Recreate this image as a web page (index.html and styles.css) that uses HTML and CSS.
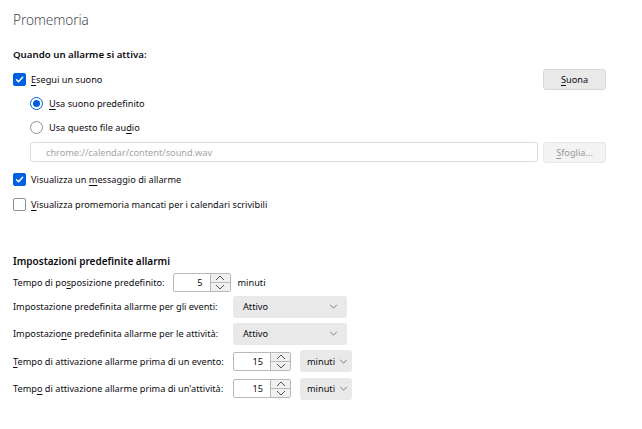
FILE: index.html
```html
<!DOCTYPE html>
<html lang="it">
<head>
<meta charset="utf-8">
<link rel="stylesheet" href="styles.css">
</head>
<body>
<div class="page">
  <h1 class="title">Promemoria</h1>

  <h2 class="heading first">Quando un allarme si attiva:</h2>

  <div class="row r-play">
    <label class="check"><span class="box on"><svg viewBox="0 0 13 13" width="13" height="13"><path d="M3 6.8 L5.4 9.2 L10.2 3.9" fill="none" stroke="#fff" stroke-width="1.8" stroke-linecap="round" stroke-linejoin="round"/></svg></span><span><u>E</u>segui un suono</span></label>
    <span class="spacer"></span>
    <button class="btn"><u>S</u>uona</button>
  </div>

  <div class="row r-radio indent">
    <label class="check"><span class="radio on"><span class="dot"></span></span><span><u>U</u>sa suono predefinito</span></label>
  </div>
  <div class="row r-radio indent">
    <label class="check"><span class="radio"></span><span>Usa questo file au<u>d</u>io</span></label>
  </div>

  <div class="row r-file indent">
    <div class="textfield">chrome://calendar/content/sound.wav</div>
    <button class="btn disabled"><u>S</u>foglia...</button>
  </div>

  <div class="row r-check1">
    <label class="check"><span class="box on"><svg viewBox="0 0 13 13" width="13" height="13"><path d="M3 6.8 L5.4 9.2 L10.2 3.9" fill="none" stroke="#fff" stroke-width="1.8" stroke-linecap="round" stroke-linejoin="round"/></svg></span><span>Visualizza un <u>m</u>essaggio di allarme</span></label>
  </div>
  <div class="row r-check2">
    <label class="check"><span class="box"></span><span><u>V</u>isualizza promemoria mancati per i calendari scrivibili</span></label>
  </div>

  <h2 class="heading second">Impostazioni predefinite allarmi</h2>

  <div class="row r-snooze">
    <span class="lbl">Tempo di po<u>s</u>posizione predefinito:</span>
    <div class="spin"><span class="val">5</span><span class="arrows"><span class="up"><svg viewBox="0 0 10 6" width="10" height="6"><path d="M1 5 L5 1 L9 5" fill="none" stroke="#555" stroke-width="1"/></svg></span><span class="down"><svg viewBox="0 0 10 6" width="10" height="6"><path d="M1 1 L5 5 L9 1" fill="none" stroke="#555" stroke-width="1"/></svg></span></span></div>
    <span class="unit">minuti</span>
  </div>

  <div class="grid">
    <span class="lbl">Impostazione predefinita allarme per gli eventi:</span>
    <div class="select wide"><span>Attivo</span><svg class="chev" viewBox="0 0 10 6" width="9" height="5"><path d="M1 1 L5 5 L9 1" fill="none" stroke="#666" stroke-width="1"/></svg></div>

    <span class="lbl">Impostazio<u>n</u>e predefinita allarme per le attività:</span>
    <div class="select wide"><span>Attivo</span><svg class="chev" viewBox="0 0 10 6" width="9" height="5"><path d="M1 1 L5 5 L9 1" fill="none" stroke="#666" stroke-width="1"/></svg></div>

    <span class="lbl"><u>T</u>empo di attivazione allarme prima di un evento:</span>
    <div class="pair">
      <div class="spin"><span class="val">15</span><span class="arrows"><span class="up"><svg viewBox="0 0 10 6" width="10" height="6"><path d="M1 5 L5 1 L9 5" fill="none" stroke="#555" stroke-width="1"/></svg></span><span class="down"><svg viewBox="0 0 10 6" width="10" height="6"><path d="M1 1 L5 5 L9 1" fill="none" stroke="#555" stroke-width="1"/></svg></span></span></div>
      <div class="select small"><span>minuti</span><svg class="chev" viewBox="0 0 10 6" width="9" height="5"><path d="M1 1 L5 5 L9 1" fill="none" stroke="#666" stroke-width="1"/></svg></div>
    </div>

    <span class="lbl">Temp<u>o</u> di attivazione allarme prima di un'attività:</span>
    <div class="pair">
      <div class="spin"><span class="val">15</span><span class="arrows"><span class="up"><svg viewBox="0 0 10 6" width="10" height="6"><path d="M1 5 L5 1 L9 5" fill="none" stroke="#555" stroke-width="1"/></svg></span><span class="down"><svg viewBox="0 0 10 6" width="10" height="6"><path d="M1 1 L5 5 L9 1" fill="none" stroke="#555" stroke-width="1"/></svg></span></span></div>
      <div class="select small"><span>minuti</span><svg class="chev" viewBox="0 0 10 6" width="9" height="5"><path d="M1 1 L5 5 L9 1" fill="none" stroke="#666" stroke-width="1"/></svg></div>
    </div>
  </div>
</div>
</body>
</html>
```

FILE: styles.css
```css
* { box-sizing: border-box; }
html, body { margin: 0; padding: 0; background: #fff; }
body {
  font-family: "Noto Sans", "Open Sans", sans-serif;
  font-size: 9.2px;
  color: #0c0b10;
  width: 642px;
  height: 429px;
  overflow: hidden;
}
.page { padding: 0 36px 0 13px; }
u { text-decoration: underline; text-underline-offset: 1.5px; text-decoration-thickness: 1px; }

.title {
  margin: 0;
  font-size: 13.6px;
  font-weight: 300;
  color: #4a4a4f;
  height: 40px;
  line-height: 40px;
  letter-spacing: -0.1px;
}
.heading {
  margin: 0;
  font-size: 9.7px;
  font-weight: 600;
  color: #0c0b10;
  display: flex;
  align-items: center;
}
.heading.first { height: 28px; }
.heading.second { height: 24px; font-size: 10px; }

.row { display: flex; align-items: center; }
.indent { padding-left: 17px; }
.r-play { height: 23px; }
.r-radio { height: 24px; }
.r-file { height: 26px; gap: 5px; }
.r-check1 { height: 28px; }
.r-check2 { height: 22px; margin-bottom: 34px; }
.r-snooze { height: 18px; }

.spacer { flex: 1; }

.check { display: flex; align-items: center; gap: 5px; }
.box {
  width: 13px; height: 13px;
  border: 1px solid #8f8f9d;
  border-radius: 2px;
  background: #fff;
  display: inline-flex;
  align-items: center; justify-content: center;
}
.box.on { background: #0061e0; border-color: #0061e0; }
.box svg { display: block; }
.radio {
  width: 13px; height: 13px;
  border: 1px solid #8f8f9d;
  border-radius: 50%;
  background: #fff;
  display: inline-flex; align-items: center; justify-content: center;
  margin-right: 1px;
}
.radio.on { border: 1px solid #0061e0; }
.radio .dot { width: 7px; height: 7px; border-radius: 50%; background: #0061e0; }

.btn {
  font: inherit;
  color: #0c0b10;
  width: 63px;
  height: 21px;
  background: #e9e9e9;
  border: 1px solid #d8d8d8;
  border-radius: 3px;
  padding: 0;
}
.btn.disabled { color: #9a9a9a; background: #f3f3f3; border-color: #e8e8e8; }

.textfield {
  flex: 1;
  height: 20px;
  border: 1px solid #dcdcdc;
  border-radius: 3px;
  padding-left: 15px;
  color: #a5a5a5;
  display: flex; align-items: center;
}

.lbl { white-space: nowrap; }
.r-snooze .lbl { margin-right: 8px; }
.unit { margin-left: 7px; }

.spin {
  display: flex;
  flex: none;
  width: 58px;
  height: 19px;
  border: 1px solid #b8b8b8;
  border-radius: 2px;
  background: #fff;
}
.spin .val {
  flex: 1;
  text-align: right;
  padding-right: 7px;
  line-height: 17px;
}
.spin .arrows {
  width: 20px;
  display: flex; flex-direction: column;
  border-left: 1px solid #b8b8b8;
}
.spin .up, .spin .down {
  flex: 1;
  display: flex; align-items: center; justify-content: center;
  background: #f0f0f0;
}
.spin .up { border-bottom: 1px solid #b8b8b8; }
.spin svg { display: block; }

.grid {
  display: grid;
  grid-template-columns: 206px auto;
  justify-content: start;
  column-gap: 14px;
  grid-template-rows: 27px 27px 28px 27px;
  align-items: center;
  margin-top: 2px;
}
.select {
  height: 22px;
  background: #e9e9e9;
  border-radius: 3px;
  display: flex; align-items: center;
  justify-content: space-between;
}
.select.wide { width: 114px; padding: 0 9px 0 10px; }
.select.small { width: 52px; padding: 0 4px 0 7px; }
.chev { display: block; }
.pair { display: flex; align-items: center; gap: 9px; }
```
